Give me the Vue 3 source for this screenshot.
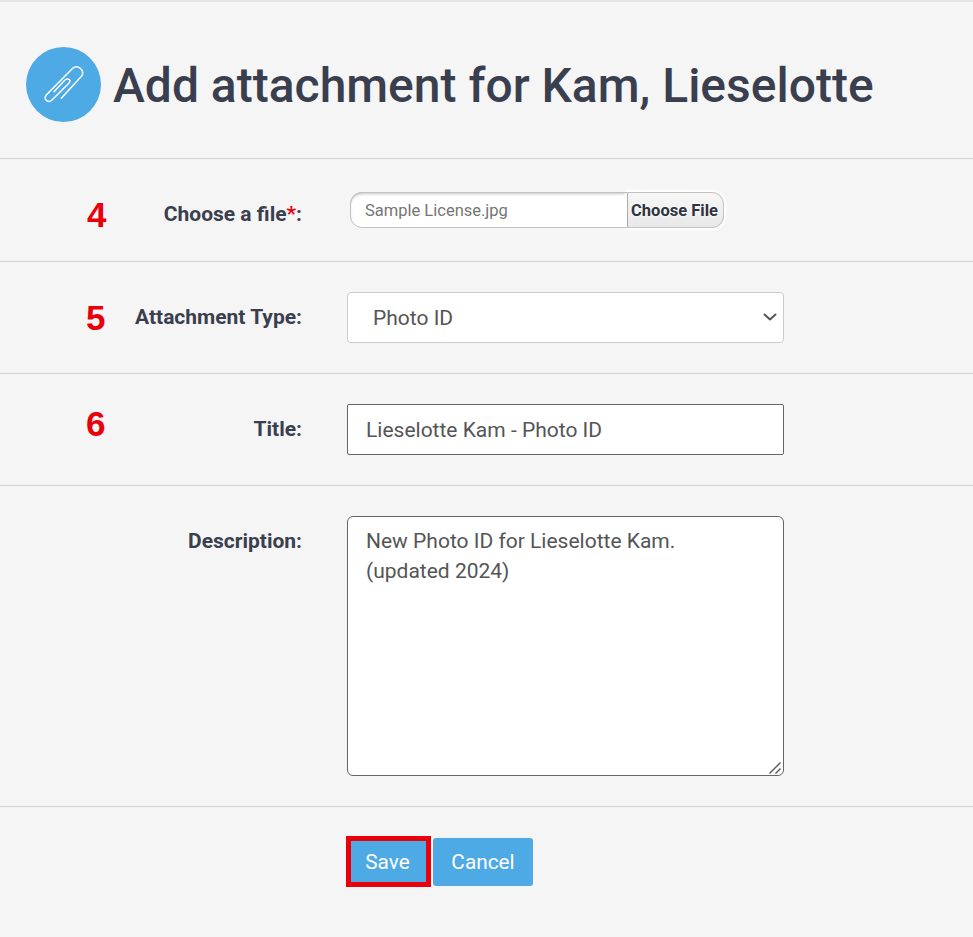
<script setup>
const title = 'Lieselotte Kam - Photo ID'
const description = 'New Photo ID for Lieselotte Kam.\n(updated 2024)'
</script>

<template>
  <main class="page">
    <header class="head">
      <div class="badge">
        <svg viewBox="0 0 75 75" width="75" height="75" fill="none" stroke="#fff" stroke-width="1.5" stroke-linecap="round" stroke-linejoin="round">
          <path d="M35.3 51.3 L55.7 29 Q58.3 25 54.3 21.3 Q50.3 18.3 46.7 21.3 L20 48.3 Q18 51.3 20.7 53.7 Q23.3 55.7 26 53 L43.3 35.7 Q44.7 33 42.7 32.3 Q40.7 31.3 38.7 33.3 L28 44.7" />
        </svg>
      </div>
      <h1 class="title">Add attachment for Kam, Lieselotte</h1>
    </header>

    <section class="row row-file">
      <span class="step step-4">4</span>
      <label class="label">Choose a file<span class="req">*</span>:</label>
      <div class="file">
        <span class="file-name">Sample License.jpg</span>
        <span class="file-btn">Choose File</span>
      </div>
    </section>

    <section class="row row-type">
      <span class="step step-5">5</span>
      <label class="label">Attachment Type:</label>
      <div class="select-wrap">
        <select class="select">
          <option>Photo ID</option>
        </select>
        <svg class="chevron" viewBox="0 0 14 8" width="14" height="8" fill="none" stroke="#555" stroke-width="2" stroke-linecap="round" stroke-linejoin="round">
          <path d="M1.5 1.5 L7 6.5 L12.5 1.5" />
        </svg>
      </div>
    </section>

    <section class="row row-title">
      <span class="step step-6">6</span>
      <label class="label">Title:</label>
      <input class="input" type="text" :value="title" />
    </section>

    <section class="row row-desc">
      <label class="label">Description:</label>
      <div class="area-wrap">
        <textarea class="textarea" :value="description"></textarea>
        <svg class="grip" viewBox="0 0 14 14" width="14" height="14" fill="none" stroke="#555" stroke-width="1.4">
          <path d="M1.5 12.5 L12.5 1.5 M7.5 12.5 L12.5 7.5" />
        </svg>
      </div>
    </section>

    <footer class="actions">
      <span class="outline"><button class="btn btn-save" type="button">Save</button></span>
      <button class="btn btn-cancel" type="button">Cancel</button>
    </footer>
  </main>
</template>

<style>
html, body { margin: 0; background: #f4f4f4; }
</style>

<style scoped>
.page {
  height: 937px;
  box-sizing: border-box;
  overflow: hidden;
  background: #f5f5f5;
  border-top: 2px solid #e6e6e6;
  font-family: Roboto, "Liberation Sans", sans-serif;
  color: #3a3f4f;
}
.head {
  height: 157px;
  box-sizing: border-box;
  padding: 45px 0 0 26px;
  display: flex;
  align-items: flex-start;
  gap: 12px;
  border-bottom: 1px solid #d3d3d3;
}
.badge {
  width: 75px;
  height: 75px;
  border-radius: 50%;
  background: #4eaae4;
  flex: none;
}
.badge svg { display: block; }
.title {
  margin: 0;
  font-size: 48px;
  line-height: 77px;
  font-weight: 500;
  white-space: nowrap;
  color: #3a3f4f;
}
.row {
  position: relative;
  display: grid;
  grid-template-columns: 302px 437px;
  column-gap: 45px;
  align-items: start;
  border-bottom: 1px solid #d3d3d3;
  box-sizing: border-box;
}
.row-file { height: 103px; padding-top: 33px; }
.row-type { height: 112px; padding-top: 30px; }
.row-title { height: 112px; padding-top: 30px; }
.row-desc { height: 321px; padding-top: 30px; }
.label {
  text-align: right;
  font-size: 21px;
  font-weight: 700;
  line-height: 24px;
  padding-top: 13px;
  color: #3a3f4f;
}
.row-file .label { padding-top: 10px; }
.req { color: #e8000b; }
.step {
  position: absolute;
  left: 86px;
  font-family: "Liberation Sans", Arial, sans-serif;
  font-size: 35px;
  font-weight: 700;
  line-height: 38px;
  color: #e8000b;
}
.step-4 { top: 37px; left: 87px; }
.step-5 { top: 37px; }
.step-6 { top: 31px; }
.file {
  position: relative;
  margin-left: 3px;
  width: 374px;
  height: 36px;
  box-sizing: border-box;
  display: flex;
  align-items: stretch;
  border-radius: 12px;
  background: #fff;
  box-shadow: inset 0 2px 3px #c4c4c4;
}
.file::after {
  content: "";
  position: absolute;
  inset: 0;
  border: 1px solid #c2c2c2;
  border-radius: 12px;
  pointer-events: none;
}
.file-name {
  flex: 1;
  padding-left: 15px;
  font-size: 16.5px;
  line-height: 37px;
  color: #757575;
}
.file-btn {
  width: 97px;
  flex: none;
  box-sizing: border-box;
  padding-right: 3px;
  border-left: 1px solid #aaa;
  border-radius: 0 12px 12px 0;
  background: linear-gradient(#f7f7f7, #e8e8e8);
  box-shadow: 0 0 3px 2px #fff;
  text-align: center;
  font-size: 16.5px;
  font-weight: 700;
  line-height: 37px;
  color: #2f3340;
  text-shadow: 0 0 3px #fff;
}
.select, .input, .textarea {
  display: block;
  width: 437px;
  box-sizing: border-box;
  background: #fff;
  font-family: Roboto, "Liberation Sans", sans-serif;
  font-size: 21px;
  color: #555;
  outline: none;
}
.select-wrap, .area-wrap { position: relative; width: 437px; }
.select {
  height: 51px;
  padding: 0 0 0 25px;
  border: 1px solid #ccc;
  border-radius: 4px;
  appearance: none;
}
.chevron {
  position: absolute;
  right: 7px;
  top: 21px;
  pointer-events: none;
}
.input {
  height: 51px;
  padding: 0 18px;
  border: 1px solid #666;
  border-radius: 2px;
}
.textarea {
  height: 260px;
  padding: 9px 18px;
  border: 1px solid #666;
  border-radius: 6px;
  line-height: 30px;
  resize: none;
}
.grip {
  position: absolute;
  right: 2px;
  bottom: 1px;
  pointer-events: none;
}
.actions {
  display: flex;
  align-items: center;
  gap: 2px;
  padding: 29px 0 0 346px;
}
.outline {
  display: block;
  border: 5px solid #e8000b;
}
.btn {
  display: block;
  height: 48px;
  width: 100px;
  padding: 0;
  border: 0;
  border-radius: 3px;
  background: #4eaae4;
  color: #fff;
  font-family: Roboto, "Liberation Sans", sans-serif;
  font-size: 20.8px;
}
.outline .btn { height: 41px; border-radius: 0; width: 75px; padding-right: 2px; }
</style>
